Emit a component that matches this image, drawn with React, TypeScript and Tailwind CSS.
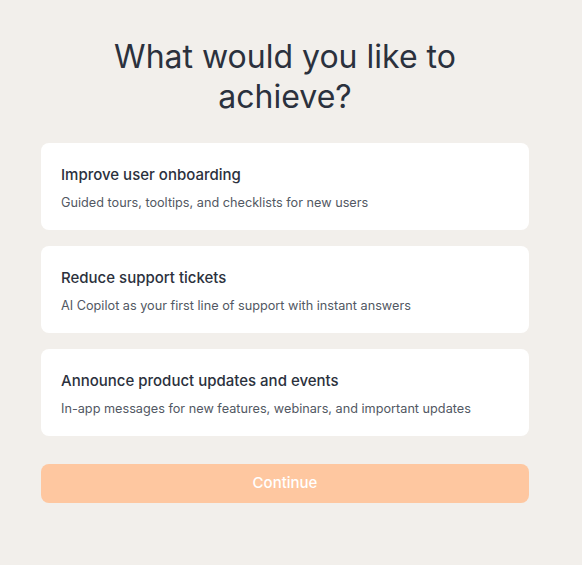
import React from "react";

const items = [
  { title: "Improve user onboarding", desc: "Guided tours, tooltips, and checklists for new users" },
  { title: "Reduce support tickets", desc: "AI Copilot as your first line of support with instant answers" },
  { title: "Announce product updates and events", desc: "In-app messages for new features, webinars, and important updates" },
];

export default function App() {
  return (
    <div className="min-h-[565px] w-full bg-[#f2efeb]" style={{ fontFamily: "Inter, 'Noto Sans', sans-serif" }}>
      <div className="ml-[41px] w-[488px] pt-[37px]">
        <h1 className="text-center text-[32px] leading-[40px] font-normal text-[#2b313d]">
          What would you like to
          <br />
          achieve?
        </h1>
        <div className="mt-[26px] flex flex-col gap-[16px]">
          {items.map((it) => (
            <div key={it.title} className="h-[87px] rounded-[8px] bg-white px-[20px] pt-[22px]">
              <div className="text-[15px] leading-[20px] font-medium text-[#2b313d]">{it.title}</div>
              <div className="mt-[9px] text-[12.7px] leading-[18px] text-[#525863]">{it.desc}</div>
            </div>
          ))}
        </div>
        <button className="mt-[28px] h-[39px] w-full rounded-[8px] bg-[#fec7a0] text-[15px] font-medium text-white">
          Continue
        </button>
      </div>
    </div>
  );
}
